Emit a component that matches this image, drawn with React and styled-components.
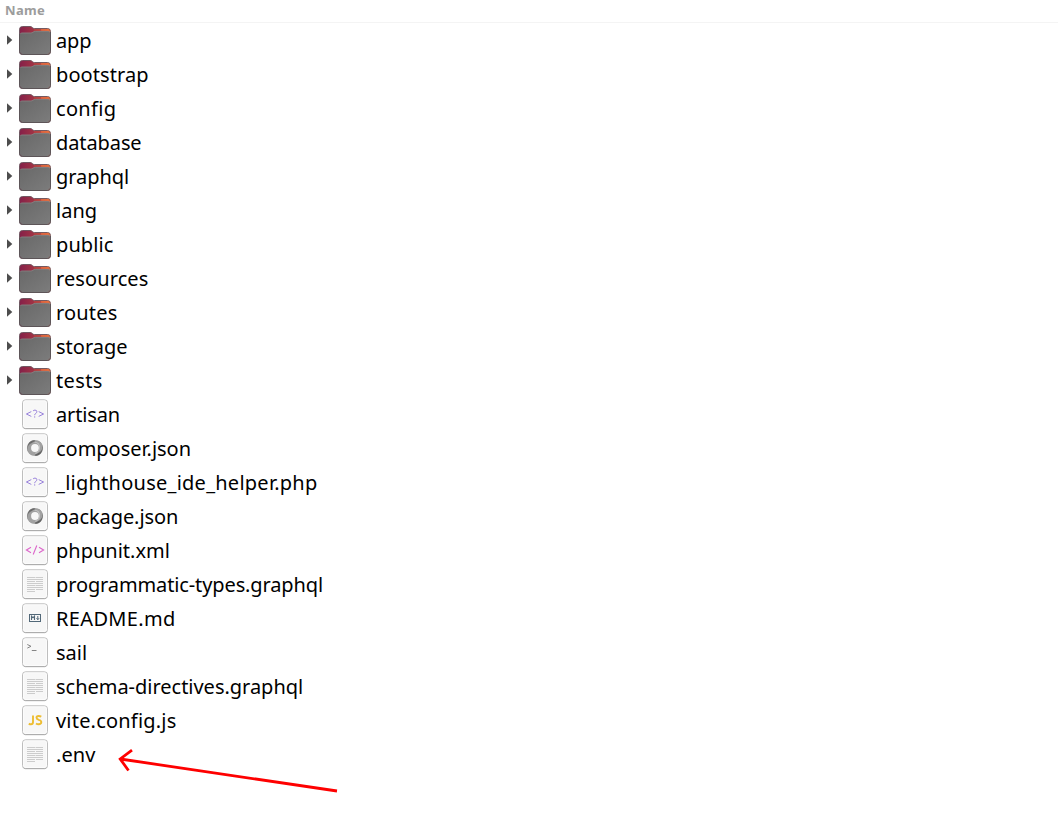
import React from "react";
import styled, { createGlobalStyle } from "styled-components";

const GlobalStyle = createGlobalStyle`
  * { box-sizing: border-box; }
  body { margin: 0; background: #fff; }
`;

const Window = styled.main`
  position: relative;
  width: 1058px;
  height: 822px;
  overflow: hidden;
  background: #fff;
  font-family: "Noto Sans", "Open Sans", sans-serif;
`;

const Header = styled.header`
  height: 23px;
  padding-left: 5px;
  border-bottom: 1px solid #f4f4f4;
  color: #9c9c9c;
  font-size: 13px;
  font-weight: 700;
  line-height: 20px;
  letter-spacing: 0.35px;
`;

const List = styled.ul`
  list-style: none;
  margin: 0;
  padding: 1px 0 0;
`;

const Row = styled.li`
  display: flex;
  height: 34px;
`;

const Toggle = styled.span`
  display: flex;
  width: 19px;
  padding: 11px 0 0 6px;
`;

const Icon = styled.svg`
  flex: none;
  width: 32px;
  height: 32px;
`;

const Name = styled.span`
  margin-left: 5px;
  color: #000;
  font-size: 20px;
  line-height: 34px;
  white-space: nowrap;
  letter-spacing: ${(p) => p.$tracking || 0}px;
`;

const Pointer = styled.svg`
  position: absolute;
  left: 110px;
  top: 742px;
  width: 236px;
  height: 56px;
`;

function Expander() {
  return (
    <svg width="7" height="11" viewBox="0 0 7 11">
      <path d="M1 .2 6.3 5 1 9.8Z" fill="#4d4d4d" />
    </svg>
  );
}

function Folder() {
  return (
    <Icon viewBox="0 0 32 32">
      <defs>
        <linearGradient id="back" x1="0" x2="1" y1="0" y2="0">
          <stop offset="0" stopColor="#842049" />
          <stop offset=".45" stopColor="#a03345" />
          <stop offset="1" stopColor="#ea7040" />
        </linearGradient>
        <linearGradient id="front" x1="0" x2="1" y1="0" y2="1">
          <stop offset="0" stopColor="#686868" />
          <stop offset="1" stopColor="#7c7c7c" />
        </linearGradient>
      </defs>
      <path d="M.5 5.5Q.5 2.5 3.5 2.5H11Q12.5 2.5 13.3 3.5T15.5 4.5H28.5Q31.5 4.5 31.5 7.5V27.5Q31.5 30.5 28.5 30.5H3.5Q.5 30.5 .5 27.5Z" fill="url(#back)" stroke="#66505a" strokeWidth=".9" />
      <path d="M1 10.2Q1 8.7 3 8.7H11.5Q13 8.7 14 7.9T16.5 7H29Q31 7 31 8.8V27.5Q31 30 28.5 30H3.5Q1 30 1 27.5Z" fill="url(#front)" />
      <path d="M1.2 9.6Q1.7 9 3 9H11.5Q13 9 14 8.2T16.5 7.3H29.5L31 8" fill="none" stroke="#908a8b" strokeWidth=".6" />
      <path d="M15 5.9H23" stroke="#b64743" strokeWidth="1.2" />
      <path d="M22 5.9H30.3" stroke="#e9703d" strokeWidth="1.2" />
      <path d="M31.5 8V27.5Q31.5 30.5 28.5 30.5H3.5Q.5 30.5 .5 27.5V10" fill="none" stroke="#5a5557" strokeWidth=".9" />
    </Icon>
  );
}

const glyphs = {
  php: (
    <g fill="none" stroke="#9a83dc" strokeWidth="1" transform="translate(0 .8)">
      <path d="M12.3 12.8 7.4 15.2 12.3 17.6M19.7 12.8 24.6 15.2 19.7 17.6" />
      <path d="M14 12.2Q14.7 11.3 16 11.3 17.9 11.3 17.9 13 17.9 13.9 16.7 14.6 15.7 15.1 15.7 16.4M15.7 17.5V18.8" />
    </g>
  ),
  json: (
    <g fill="none" transform="translate(0 .3)">
      <circle cx="16" cy="15.7" r="6" stroke="#a1a1a1" strokeWidth="4.2" />
      <path d="M15.5 7.8A8 8 0 0 0 13 23 6.5 6.5 0 0 1 12.8 10.8Q14 9.5 16 9.1" fill="#6b6b6b" />
      <path d="M16.5 23.6A8 8 0 0 0 19 8.4 6.5 6.5 0 0 1 19.2 20.6Q18 21.9 16 22.3" fill="#626262" />
      <path d="M15.5 10Q21 10 20.5 16 20 20 16 21" stroke="#c2c2c2" strokeWidth="1.1" />
    </g>
  ),
  xml: (
    <path transform="translate(0 .8)" d="M12 12.5 7.4 15.2 12 17.9M20 12.5 24.6 15.2 20 17.9M17.8 10.7 14.2 19.7" fill="none" stroke="#dc64ca" strokeWidth="1.1" />
  ),
  text: (
    <path d="M8 9.5H16.5M17 9.5H24M8 11.5H24M8 13.5H16M17 13.5H24M8 15.5H24M8 17.5H16.5M17 17.5H24M8 19.5H24M8 21.5H16M17 21.5H24M8 23.5H16" stroke="#cccccc" strokeWidth="1" />
  ),
  markdown: (
    <g fill="none" stroke="#526878">
      <rect x="10.5" y="12.5" width="11" height="7" strokeWidth="1" />
      <path d="M12.5 18V14.2L14 15.8 15.5 14.2V18" strokeWidth="1.1" />
      <path d="M18.8 14V17.7M17.5 16.2 18.8 17.7 20.1 16.2" strokeWidth="1" />
    </g>
  ),
  shell: (
    <g fill="none" stroke="#858585" strokeWidth="1">
      <path d="M8.3 8.5 12 10.3 8.3 12.1M12.8 14.5H17.5" />
    </g>
  ),
  js: (
    <g fill="none" stroke="#edbd32" strokeWidth="1.9" transform="translate(0 .4)">
      <path d="M14 11V17.6Q14 19.9 12 19.9 10.8 19.9 9.8 19.2" />
      <path d="M22.3 12.3Q21 11.6 19.6 11.6 17.5 11.6 17.5 13.4 17.5 14.7 19.8 15.4 22.3 16.1 22.3 17.7 22.3 19.9 19.6 19.9 18.2 19.9 17 19.1" />
    </g>
  ),
};

function Document({ kind }) {
  return (
    <Icon viewBox="0 0 32 32">
      <rect x="3.5" y="1.8" width="25" height="28.8" rx="3" fill="#f7f7f7" stroke="#bebebe" />
      <path d="M4.5 29.6Q5 30.6 6.5 30.6H25.5Q27 30.6 27.5 29.6" fill="none" stroke="#aaa" />
      <rect x="4.5" y="2.8" width="23" height="26.6" rx="2" fill="none" stroke="#fff" strokeOpacity=".65" />
      {glyphs[kind]}
    </Icon>
  );
}

const entries = [
  ["app", "folder", -0.1],
  ["bootstrap", "folder", 0.08],
  ["config", "folder", 0.33],
  ["database", "folder", -0.1],
  ["graphql", "folder", -0.05],
  ["lang", "folder", 0],
  ["public", "folder", 0.08],
  ["resources", "folder", 0.1],
  ["routes", "folder", 0.18],
  ["storage", "folder", 0],
  ["tests", "folder", 0.35],
  ["artisan", "php", -0.15],
  ["composer.json", "json", -0.02],
  ["_lighthouse_ide_helper.php", "php", 0.25],
  ["package.json", "json", -0.07],
  ["phpunit.xml", "xml", 0],
  ["programmatic-types.graphql", "text", -0.12],
  ["README.md", "markdown", 0.35],
  ["sail", "shell", 0],
  ["schema-directives.graphql", "text", -0.02],
  ["vite.config.js", "js", 0.2],
  [".env", "text", 0.05],
];

export default function App() {
  return (
    <>
      <GlobalStyle />
      <Window>
        <Header>Name</Header>
        <List>
          {entries.map(([name, kind, tracking]) => (
            <Row key={name}>
              <Toggle>{kind === "folder" && <Expander />}</Toggle>
              {kind === "folder" ? <Folder /> : <Document kind={kind} />}
              <Name $tracking={tracking}>{name}</Name>
            </Row>
          ))}
        </List>
        <Pointer viewBox="0 0 236 56" fill="none" stroke="#fe0000" strokeWidth="2.8">
          <path d="M227 49 10.2 17M22 8.2 10.2 17 18.5 28.5" />
        </Pointer>
      </Window>
    </>
  );
}
